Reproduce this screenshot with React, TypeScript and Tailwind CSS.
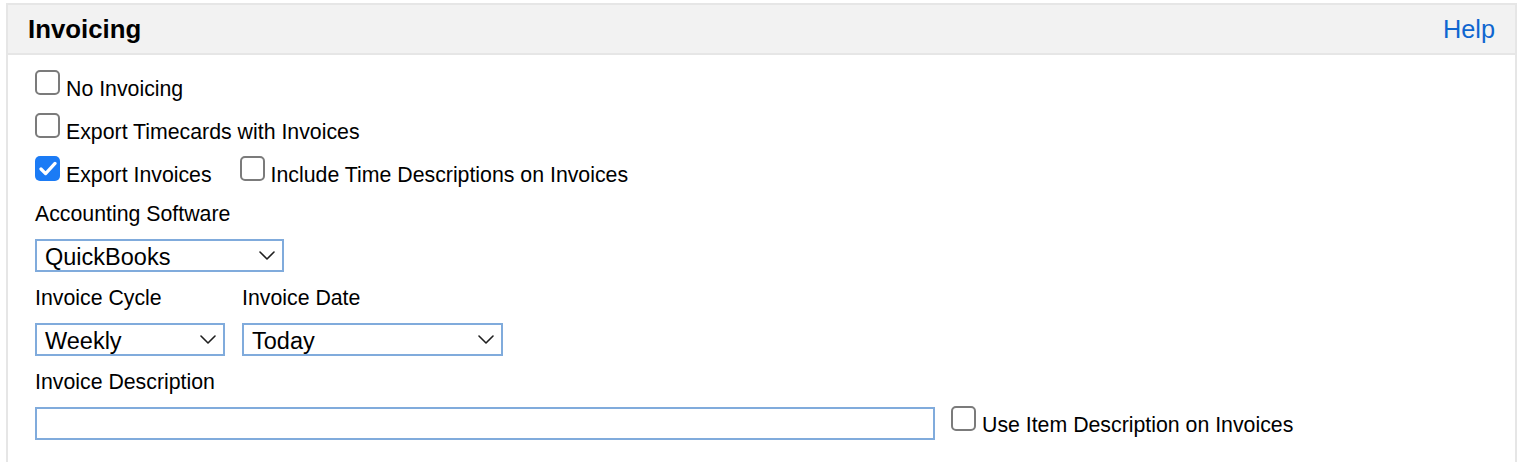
import React from 'react';

function Check({ checked = false }: { checked?: boolean }) {
  if (checked) {
    return (
      <span className="inline-flex h-[25px] w-[25px] shrink-0 items-center justify-center rounded-[5px] bg-[#1b7bf5]">
        <svg width="18" height="15" viewBox="0 0 18 15" fill="none">
          <path d="M2 8 L6.6 12.6 L16 2.4" stroke="#ffffff" strokeWidth="3.2" strokeLinecap="round" strokeLinejoin="round" />
        </svg>
      </span>
    );
  }
  return <span className="inline-block h-[25px] w-[25px] shrink-0 rounded-[5px] border-2 border-[#7b7b7b] bg-white" />;
}

function CheckRow({ label, checked }: { label: string; checked?: boolean }) {
  return (
    <label className="flex items-start">
      <Check checked={checked} />
      <span className="ml-[6px] pt-[7px] leading-[24px]">{label}</span>
    </label>
  );
}

function Select({ value, width }: { value: string; width: string }) {
  return (
    <div className={`flex h-[33px] items-center justify-between border-2 border-[#80abdc] bg-white pl-[8px] pr-[7px] text-[23.5px] leading-none ${width}`}>
      <span className="pt-[4px]">{value}</span>
      <svg width="16" height="9" viewBox="0 0 16 9" fill="none">
        <path d="M1 1 L8 8 L15 1" stroke="#1f1f1f" strokeWidth="1.6" strokeLinecap="round" strokeLinejoin="round" />
      </svg>
    </div>
  );
}

export default function App() {
  return (
    <div className="min-h-[462px] bg-white pt-[3px] pl-[6px] pr-[3px] font-['Liberation_Sans',Arial,sans-serif] text-[21.3px] text-black">
      <div className="border-2 border-[#e6e6e6]">
        <div className="flex h-[50px] items-center justify-between border-b-2 border-[#e6e6e6] bg-[#f2f2f2] pl-[20px] pr-[20px]">
          <h2 className="text-[25.8px] font-bold leading-[30px]">Invoicing</h2>
          <a href="#help" className="text-[25.3px] leading-[30px] text-[#0f66d0]">
            Help
          </a>
        </div>

        <div className="flex flex-col pb-[40px] pl-[27px] pt-[15px]">
          <div className="flex flex-col gap-[12px]">
            <CheckRow label="No Invoicing" />
            <CheckRow label="Export Timecards with Invoices" />
            <div className="flex items-start">
              <CheckRow label="Export Invoices" checked />
              <div className="ml-[28px]">
                <CheckRow label="Include Time Descriptions on Invoices" />
              </div>
            </div>
          </div>

          <div className="mt-[15px] leading-[24px]">Accounting Software</div>
          <div className="mt-[13px]">
            <Select value="QuickBooks" width="w-[249px]" />
          </div>

          <div className="mt-[14px] flex gap-[17px]">
            <div className="flex flex-col">
              <div className="leading-[24px]">Invoice Cycle</div>
              <div className="mt-[13px]">
                <Select value="Weekly" width="w-[190px]" />
              </div>
            </div>
            <div className="flex flex-col">
              <div className="leading-[24px]">Invoice Date</div>
              <div className="mt-[13px]">
                <Select value="Today" width="w-[261px]" />
              </div>
            </div>
          </div>

          <div className="mt-[14px] leading-[24px]">Invoice Description</div>
          <div className="mt-[13px] flex items-start gap-[16px]">
            <input type="text" className="h-[33px] w-[900px] border-2 border-[#80abdc] bg-white outline-none" />
            <div className="-mt-[1px]">
              <CheckRow label="Use Item Description on Invoices" />
            </div>
          </div>
        </div>
      </div>
    </div>
  );
}
